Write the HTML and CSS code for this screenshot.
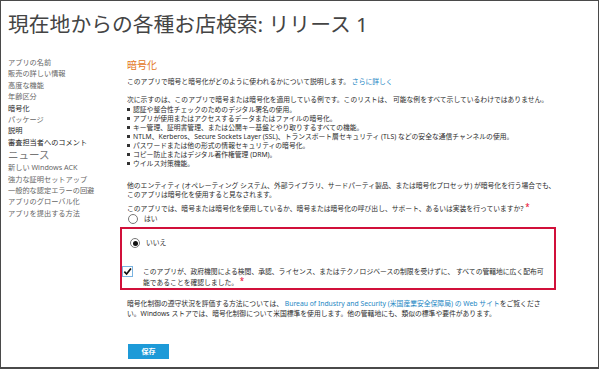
FILE: index.html
```html
<!DOCTYPE html>
<html lang="ja">
<head>
    <meta charset="UTF-8">
    <title>現在地からの各種お店検索: リリース 1</title>
    <link rel="stylesheet" href="styles.css">
</head>
<body>
    <div class="page">
        <h1>現在地からの各種お店検索: リリース 1</h1>

        <div class="layout">
            <div class="nav">
                <ul class="nav-list first">
                    <li>アプリの名前</li>
                    <li>販売の詳しい情報</li>
                    <li>高度な機能</li>
                    <li>年齢区分</li>
                    <li class="done">暗号化</li>
                    <li>パッケージ</li>
                    <li class="done">説明</li>
                    <li class="done">審査担当者へのコメント</li>
                </ul>
                <h2>ニュース</h2>
                <ul class="nav-list">
                    <li>新しい Windows ACK</li>
                    <li>強力な証明セットアップ</li>
                    <li>一般的な認定エラーの回避</li>
                    <li>アプリのグローバル化</li>
                    <li>アプリを提出する方法</li>
                </ul>
            </div>

            <div class="main">
                <h3>暗号化</h3>
                <p class="lead">このアプリで暗号と暗号化がどのように使われるかについて説明します。 <a>さらに詳しく</a></p>

                <p class="intro">次に示すのは、このアプリで暗号または暗号化を適用している例です。このリストは、 可能な例をすべて示しているわけではありません。</p>
                <ul class="bullets">
                    <li>認証や整合性チェックのためのデジタル署名の使用。</li>
                    <li>アプリが使用またはアクセスするデータまたはファイルの暗号化。</li>
                    <li>キー管理、証明書管理、または公開キー基盤とやり取りするすべての機能。</li>
                    <li>NTLM、Kerberos、Secure Sockets Layer (SSL)、トランスポート層セキュリティ (TLS) などの安全な通信チャンネルの使用。</li>
                    <li>パスワードまたは他の形式の情報セキュリティの暗号化。</li>
                    <li>コピー防止またはデジタル著作権管理 (DRM)。</li>
                    <li>ウイルス対策機能。</li>
                </ul>

                <p class="entity">他のエンティティ (オペレーティング システム、外部ライブラリ、サードパーティ製品、または暗号化プロセッサ) が暗号化を行う場合でも、<br>このアプリは暗号化を使用すると見なされます。</p>

                <p class="question">このアプリでは、暗号または暗号化を使用しているか、暗号または暗号化の呼び出し、サポート、あるいは実装を行っていますか? <span class="req">*</span></p>

                <div class="option">
                    <span class="radio"></span>
                    <span>はい</span>
                </div>

                <div class="highlight">
                    <div class="option">
                        <span class="radio checked"></span>
                        <span>いいえ</span>
                    </div>
                    <div class="confirm">
                        <span class="checkbox">
                            <svg width="9" height="9" viewBox="0 0 10 10"><path d="M1.5 5.2 L4 7.8 L8.8 1.6" fill="none" stroke="#111" stroke-width="1.9"/></svg>
                        </span>
                        <p>このアプリが、政府機関による検閲、承認、ライセンス、またはテクノロジベースの制限を受けずに、 すべての管轄地に広く配布可能であることを確認しました。 <span class="req">*</span></p>
                    </div>
                </div>

                <p class="note">暗号化制御の遵守状況を評価する方法については、 <a>Bureau of Industry and Security (米国産業安全保障局) の Web サイト</a>をご覧ください。Windows ストアでは、暗号化制御について米国標準を使用します。他の管轄地にも、類似の標準や要件があります。</p>

                <button class="save">保存</button>
            </div>
        </div>
    </div>
</body>
</html>
```

FILE: styles.css
```css
body {
    margin: 0;
    padding: 0;
    background-color: #fff;
    font-family: "Noto Sans", "Noto Sans CJK JP", sans-serif;
    color: #2b2b2b;
}
.page {
    width: 599px;
    height: 369px;
    box-sizing: border-box;
    border: 1px solid #4a4a4a;
    border-bottom-width: 2px;
    overflow: hidden;
}
h1 {
    margin: 0;
    padding: 12px 0 0 7px;
    font-size: 20.8px;
    line-height: 22px;
    font-weight: normal;
    color: #444;
}
.layout {
    display: flex;
    padding-top: 20px;
}
.nav {
    width: 126px;
    flex: none;
    padding-left: 7px;
    box-sizing: border-box;
}
.nav-list {
    list-style: none;
    margin: 0;
    padding: 0;
    font-size: 7.2px;
    line-height: 11.4px;
    color: #666;
}
.nav-list.first {
    padding-top: 2px;
}
.nav-list .done {
    color: #222;
}
.nav h2 {
    margin: 0;
    font-size: 10.5px;
    line-height: 14px;
    font-weight: normal;
    color: #777;
}
.main {
    flex: 1;
    padding-right: 28px;
    font-size: 6.8px;
    line-height: 9.5px;
}
.main h3 {
    margin: 4px 0 5px;
    font-size: 10px;
    line-height: 12px;
    font-weight: normal;
    color: #e3761d;
}
.main p {
    margin: 0;
}
.main a {
    color: #2286c3;
}
.req {
    color: #e8002a;
    font-size: 8px;
    line-height: 0;
    vertical-align: 1px;
}
.lead {
    padding-top: 1px;
}
.intro {
    margin-top: 8.75px !important;
}
.bullets {
    margin: 0;
    padding-left: 6px;
    line-height: 9px;
}
.bullets li {
    list-style: none;
    position: relative;
}
.bullets li::before {
    content: "";
    position: absolute;
    left: -6px;
    top: 3.5px;
    width: 2.5px;
    height: 2.5px;
    background: #333;
}
.entity {
    margin-top: 12.75px !important;
    line-height: 9px;
}
.question {
    margin-top: 5px !important;
    line-height: 9px;
}
.option {
    display: flex;
    align-items: center;
    gap: 6px;
    height: 12px;
    margin-top: 0.5px;
    margin-left: 1px;
}
.radio {
    width: 8px;
    height: 8px;
    border: 1px solid #777;
    border-radius: 50%;
    display: flex;
    align-items: center;
    justify-content: center;
}
.radio.checked::after {
    content: "";
    width: 5px;
    height: 5px;
    border-radius: 50%;
    background: #111;
}
.highlight {
    margin: 2px 14px 0 -7px;
    padding: 8px 8px 0 7px;
    border: 2px solid #d1103a;
}
.highlight .option {
    margin-top: 0;
}
.confirm {
    display: flex;
    gap: 10px;
    margin-top: 16.5px;
    margin-left: -7px;
    line-height: 11px;
}
.checkbox {
    flex: none;
    width: 9px;
    height: 9px;
    border: 1px solid #7ab3e0;
    display: flex;
    align-items: center;
    justify-content: center;
}
.note {
    margin-top: 9.5px !important;
    padding-right: 20px;
    line-height: 10.4px;
}
.save {
    display: block;
    margin: 24px 0 0 1px;
    width: 41px;
    height: 15px;
    padding: 0;
    border: none;
    background: #1d9ad8;
    color: #fff;
    font-family: "Noto Sans CJK JP", sans-serif;
    font-size: 7px;
    font-weight: bold;
    cursor: pointer;
}
```
